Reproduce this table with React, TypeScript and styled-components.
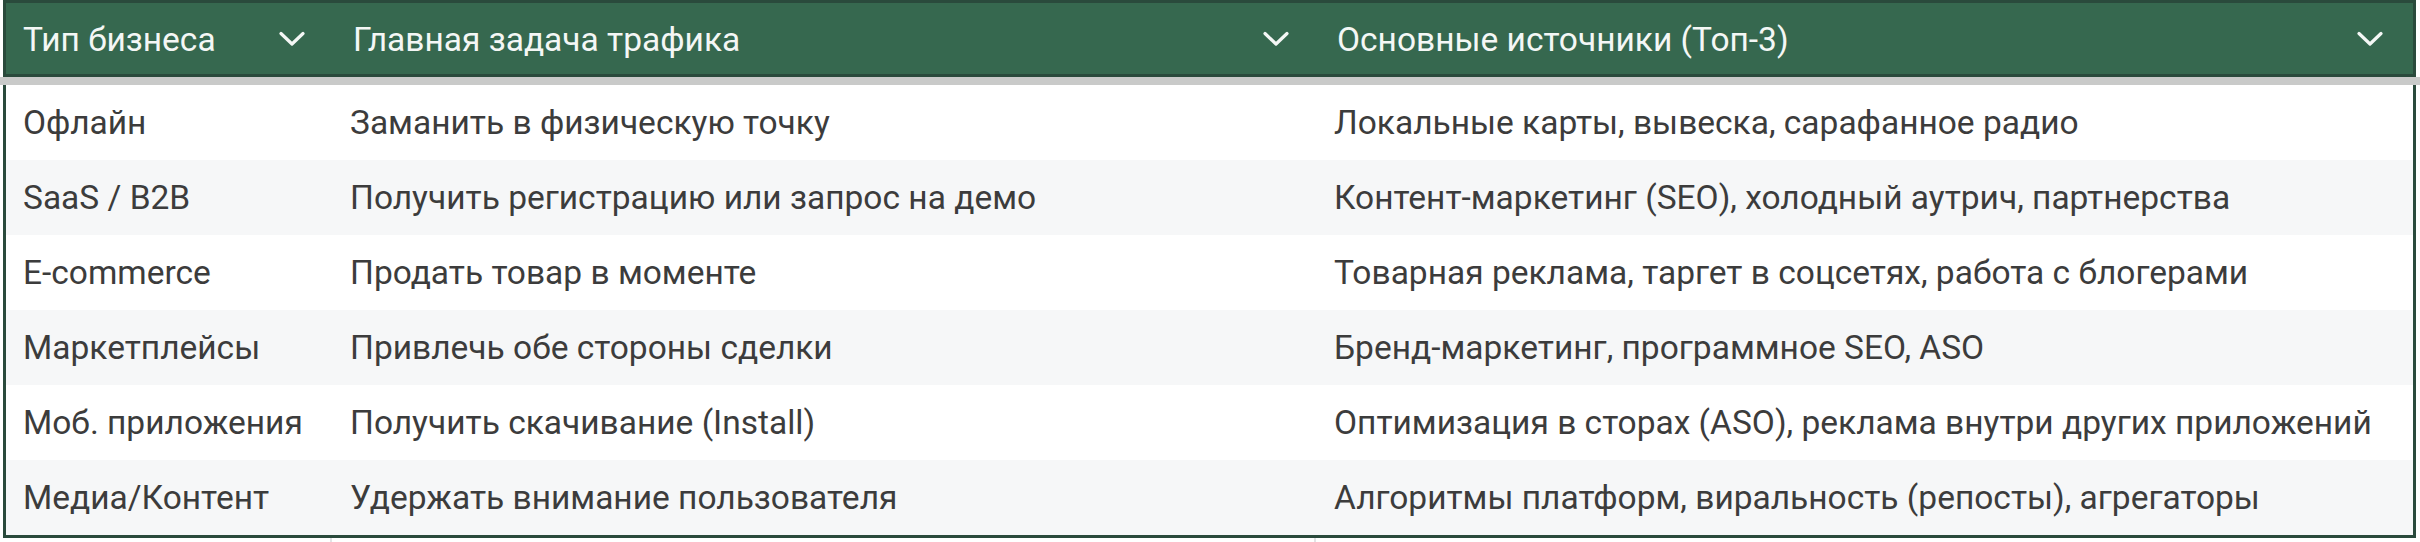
import styled, { createGlobalStyle } from 'styled-components';

const GlobalStyle = createGlobalStyle`
  html, body {
    margin: 0;
    padding: 0;
    background: #ffffff;
  }
  body {
    font-family: Roboto, 'Liberation Sans', sans-serif;
  }
`;

const Page = styled.div`
  width: 2420px;
  height: 542px;
  padding-left: 3px;
  box-sizing: border-box;
  overflow: hidden;
`;

const Table = styled.div`
  width: 2413px;
`;

const HeaderRow = styled.div`
  display: grid;
  grid-template-columns: 329px 984px 1fr;
  height: 77px;
  box-sizing: border-box;
  background: #36684f;
  border: 3px solid #2a4a3c;
`;

const HeaderCell = styled.div<{ $first?: boolean }>`
  display: flex;
  align-items: center;
  justify-content: space-between;
  padding: 1px 30px 0 ${({ $first }) => ($first ? '17px' : '18px')};
  color: #f4f7f5;
  font-size: 33.5px;
  font-weight: 400;
  white-space: nowrap;
`;

const Chevron = () => (
  <svg width='26' height='16' viewBox='0 0 26 16' fill='none'>
    <path
      d='M2 2.5 L13 13 L24 2.5'
      stroke='#f4f7f5'
      strokeWidth='3.2'
      strokeLinecap='round'
      strokeLinejoin='round'
    />
  </svg>
);

const Separator = styled.div`
  height: 8px;
  margin-left: -3px;
  width: 2420px;
  background: #c9cac9;
`;

const Body = styled.div`
  border: 3px solid #2a4a3c;
  border-top: none;
`;

const Row = styled.div<{ $shaded: boolean }>`
  display: grid;
  grid-template-columns: 326px 984px 1fr;
  height: 75px;
  align-items: center;
  background: ${({ $shaded }) => ($shaded ? '#f6f7f8' : '#ffffff')};
`;

const Cell = styled.div<{ $first?: boolean }>`
  padding-left: ${({ $first }) => ($first ? '17px' : '18px')};
  color: #3c3c3c;
  font-size: 33.5px;
  white-space: nowrap;
`;

const GridStrip = styled.div`
  display: grid;
  grid-template-columns: 332px 984px 1fr;
  height: 10px;
  margin-left: -3px;
`;

const GridLine = styled.div`
  border-right: 2px solid #e2e4e6;
`;

const headers = ['Тип бизнеса', 'Главная задача трафика', 'Основные источники (Топ-3)'];

const rows = [
  ['Офлайн', 'Заманить в физическую точку', 'Локальные карты, вывеска, сарафанное радио'],
  ['SaaS / B2B', 'Получить регистрацию или запрос на демо', 'Контент-маркетинг (SEO), холодный аутрич, партнерства'],
  ['E-commerce', 'Продать товар в моменте', 'Товарная реклама, таргет в соцсетях, работа с блогерами'],
  ['Маркетплейсы', 'Привлечь обе стороны сделки', 'Бренд-маркетинг, программное SEO, ASO'],
  ['Моб. приложения', 'Получить скачивание (Install)', 'Оптимизация в сторах (ASO), реклама внутри других приложений'],
  ['Медиа/Контент', 'Удержать внимание пользователя', 'Алгоритмы платформ, виральность (репосты), агрегаторы'],
];

export default function App() {
  return (
    <Page>
      <GlobalStyle />
      <Table>
        <HeaderRow>
          {headers.map((title, i) => (
            <HeaderCell key={title} $first={i === 0}>
              <span>{title}</span>
              <Chevron />
            </HeaderCell>
          ))}
        </HeaderRow>
        <Separator />
        <Body>
          {rows.map((row, i) => (
            <Row key={row[0]} $shaded={i % 2 === 1}>
              {row.map((text, j) => (
                <Cell key={j} $first={j === 0}>
                  {text}
                </Cell>
              ))}
            </Row>
          ))}
        </Body>
        <GridStrip>
          <GridLine />
          <GridLine />
          <div />
        </GridStrip>
      </Table>
    </Page>
  );
}
